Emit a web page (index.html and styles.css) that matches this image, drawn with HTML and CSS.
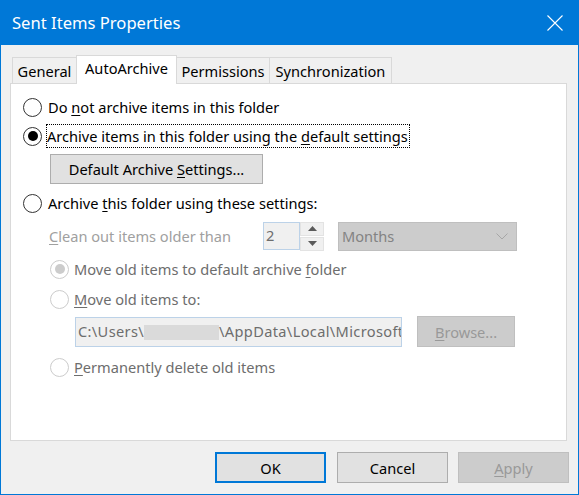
FILE: index.html
```html
<!DOCTYPE html>
<html>
<head>
<meta charset="utf-8">
<link rel="stylesheet" href="styles.css">
</head>
<body>
<div class="window">
  <div class="titlebar">
    <span class="title">Sent Items Properties</span>
    <span class="close">
      <svg width="16" height="16" viewBox="0 0 16 16"><path d="M0.5 0.5 L15.5 15.5 M15.5 0.5 L0.5 15.5" stroke="#fff" stroke-width="1.1" fill="none"/></svg>
    </span>
  </div>
  <div class="tabs">
    <div class="tab t-general">General</div>
    <div class="tab t-auto active">AutoArchive</div>
    <div class="tab t-perm">Permissions</div>
    <div class="tab t-sync">Synchronization</div>
  </div>
  <div class="panel">
    <div class="row r1"><span class="radio"></span><span class="label">Do <u>n</u>ot archive items in this folder</span></div>
    <div class="row r2"><span class="radio checked"></span><span class="label focus">Archive items in this folder using the <u>d</u>efault settings</span></div>
    <div class="btn defbtn"><span>Default Archive <u>S</u>ettings...</span></div>
    <div class="row r3"><span class="radio"></span><span class="label">Archive <u>t</u>his folder using these settings:</span></div>
    <div class="clean">
      <span class="clean-label"><u>C</u>lean out items older than</span>
      <span class="spin-input">2</span>
      <span class="spin">
        <span class="spin-btn"><svg width="9" height="5" viewBox="0 0 9 5"><path d="M0 5 L4.5 0 L9 5 Z" fill="#5a5a5a"/></svg></span>
        <span class="spin-btn"><svg width="9" height="5" viewBox="0 0 9 5"><path d="M0 0 L4.5 5 L9 0 Z" fill="#5a5a5a"/></svg></span>
      </span>
      <span class="combo"><span>Months</span><svg width="12" height="7" viewBox="0 0 12 7"><path d="M0.5 0.5 L6 6 L11.5 0.5" stroke="#a6a6a6" stroke-width="1" fill="none"/></svg></span>
    </div>
    <div class="row sub r4"><span class="radio dis checked"></span><span class="label dim">Move old items to default archive <u>f</u>older</span></div>
    <div class="row sub r5"><span class="radio dis"></span><span class="label dim"><u>M</u>ove old items to:</span></div>
    <div class="pathrow">
      <span class="path">C:\Users\<span class="redact"></span>\AppData\Local\Microsoft</span>
      <span class="btn dbtn browse"><span><u>B</u>rowse...</span></span>
    </div>
    <div class="row sub r6"><span class="radio dis"></span><span class="label dim"><u>P</u>ermanently delete old items</span></div>
  </div>
  <div class="buttons">
    <div class="btn ok"><span>OK</span></div>
    <div class="btn cancel"><span>Cancel</span></div>
    <div class="btn dbtn apply"><span><u>A</u>pply</span></div>
  </div>
</div>
</body>
</html>
```
FILE: styles.css
```css
html, body {
  margin: 0;
  padding: 0;
  background: #f0f0f0;
}
body {
  font-family: "Noto Sans", "Open Sans", sans-serif;
  font-size: 14.6px;
  color: #000;
}
u {
  text-decoration: underline;
  text-underline-offset: 2px;
}
.window {
  width: 579px;
  height: 495px;
  box-sizing: border-box;
  border: 1px solid #0078d7;
  background: #f0f0f0;
  display: flex;
  flex-direction: column;
}
.titlebar {
  flex: none;
  height: 44px;
  background: #0078d7;
  color: #fff;
  display: flex;
  align-items: center;
  justify-content: space-between;
  padding-left: 11px;
}
.title {
  font-size: 16.6px;
  line-height: 24px;
  margin-top: -1px;
}
.close {
  width: 46px;
  height: 44px;
  display: flex;
  align-items: center;
  justify-content: center;
}
.close svg {
  margin-top: -1px;
}
.tabs {
  flex: none;
  display: flex;
  align-items: flex-end;
  height: 28px;
  margin: 10px 0 0 11px;
}
.tab {
  box-sizing: border-box;
  height: 26px;
  border: 1px solid #d9d9d9;
  border-bottom: none;
  background: #f0f0f0;
  margin-left: -1px;
  display: flex;
  justify-content: center;
  padding-top: 3px;
  line-height: 20px;
  white-space: nowrap;
}
.t-general { width: 65px; margin-left: 0; }
.t-auto { width: 101px; }
.t-perm { width: 94px; }
.t-sync { width: 123px; }
.tab.active {
  height: 29px;
  background: #fff;
  margin-bottom: -1px;
  padding-top: 2px;
  position: relative;
  z-index: 1;
}
.panel {
  flex: none;
  box-sizing: border-box;
  margin-left: 9px;
  width: 557px;
  height: 358px;
  border: 1px solid #d9d9d9;
  background: #fff;
  padding-left: 12px;
  display: flex;
  flex-direction: column;
  align-items: flex-start;
}
.row {
  display: flex;
  align-items: center;
  height: 28px;
  white-space: nowrap;
}
.r1 { margin-top: 9px; }
.r2 { margin-top: 1px; }
.r3 { margin-top: 5px; }
.r4 { margin-top: 5px; }
.r5 { margin-top: 2px; }
.r6 { margin-top: 6px; }
.sub { margin-left: 27px; }
.radio {
  flex: none;
  box-sizing: border-box;
  width: 19px;
  height: 19px;
  border: 1px solid #333;
  border-radius: 50%;
  background: #fff;
  display: flex;
  align-items: center;
  justify-content: center;
}
.radio.checked::after {
  content: "";
  width: 10px;
  height: 10px;
  border-radius: 50%;
  background: #000;
}
.radio.dis {
  border-color: #cccccc;
}
.radio.dis.checked::after {
  background: #cccccc;
}
.label {
  margin-left: 6px;
  line-height: 20px;
}
.sub .label {
  margin-left: 5px;
}
.label.focus {
  margin-left: 4px;
  padding: 1px 1px 1px 0;
  border: 1px dotted #000;
}
.dim {
  color: #6d6d6d;
}
.btn {
  box-sizing: border-box;
  display: flex;
  align-items: center;
  justify-content: center;
  background: #e1e1e1;
  border: 1px solid #adadad;
  line-height: 20px;
  white-space: nowrap;
}
.dbtn {
  background: #cccccc;
  border-color: #bfbfbf;
  color: #999999;
}
.defbtn {
  margin-top: 4px;
  margin-left: 27px;
  width: 213px;
  height: 30px;
}
.clean {
  margin-top: 5px;
  margin-left: 26px;
  display: flex;
  align-items: center;
  height: 28px;
  white-space: nowrap;
}
.clean-label {
  width: 214px;
  color: #a0a0a0;
  line-height: 20px;
}
.spin-input {
  box-sizing: border-box;
  width: 37px;
  height: 28px;
  border: 1px solid #bcd2e8;
  background: #f0f0f0;
  color: #6d6d6d;
  padding-left: 2px;
  line-height: 24px;
}
.spin {
  display: flex;
  flex-direction: column;
  width: 24px;
  height: 29px;
}
.spin-btn {
  box-sizing: border-box;
  height: 14px;
  border: 1px solid #e3e3e3;
  background: #f0f0f0;
  display: flex;
  align-items: center;
  justify-content: center;
}
.spin-btn + .spin-btn {
  margin-top: 1px;
}
.combo {
  box-sizing: border-box;
  margin-left: 14px;
  width: 179px;
  height: 29px;
  background: #cccccc;
  border: 1px solid #bfbfbf;
  color: #838383;
  display: flex;
  align-items: center;
  justify-content: space-between;
  padding: 0 8px 0 3px;
}
.pathrow {
  margin-top: 4px;
  margin-left: 52px;
  display: flex;
  align-items: flex-start;
  height: 30px;
}
.path {
  box-sizing: border-box;
  width: 327px;
  height: 30px;
  border: 1px solid #bcd2e8;
  background: #f0f0f0;
  color: #6d6d6d;
  padding-left: 2px;
  line-height: 27px;
  letter-spacing: 0.35px;
  white-space: nowrap;
  overflow: hidden;
}
.redact {
  display: inline-block;
  width: 75px;
  height: 15px;
  background: #dadada;
  vertical-align: -3px;
}
.browse {
  margin-left: 15px;
  margin-top: -1px;
  width: 98px;
  height: 31px;
}
.buttons {
  flex: none;
  display: flex;
  justify-content: flex-end;
  margin: 11px 9px 0 0;
}
.buttons .btn {
  width: 111px;
  height: 31px;
}
.ok {
  border: 2px solid #0078d7 !important;
  margin-right: 11px;
}
.cancel {
  margin-right: 10px;
}
```
